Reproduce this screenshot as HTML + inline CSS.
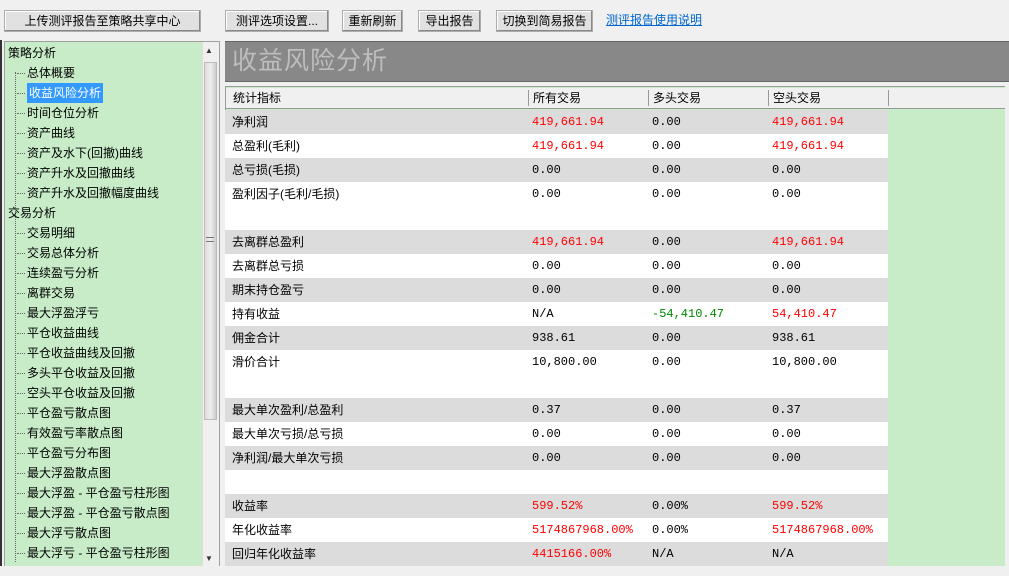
<!DOCTYPE html>
<html><head><meta charset="utf-8"><style>
*{margin:0;padding:0;box-sizing:border-box}
body{width:1009px;height:576px;background:#f0f0f0;position:relative;overflow:hidden;font-family:"Liberation Mono","WenQuanYi Zen Hei","Noto Sans CJK SC",monospace;font-size:12px;color:#000}
.abs{position:absolute}
.btn{position:absolute;top:10px;height:22px;background:#e1e1e1;border:1px solid #adadad;box-shadow:inset -1px -1px 0 #888,inset 1px 1px 0 #fff;font-family:"Liberation Sans","WenQuanYi Zen Hei",sans-serif;font-size:12px;text-align:center;line-height:20px}
.cjk{font-family:"Liberation Sans","WenQuanYi Zen Hei","Noto Sans CJK SC",sans-serif}
.tree{left:4px;top:41px;width:216px;height:526px;background:#c8ecc8;border:1px solid #a0a0a0}
.ti{position:absolute;left:22px;height:20px;line-height:20px;font-size:12px;white-space:nowrap}
.ti::before{content:"";position:absolute;left:-10px;top:10px;width:8px;border-top:1px dotted #666}
.th{position:absolute;left:3px;height:20px;line-height:20px;font-size:12px}
.row{position:absolute;left:225px;width:663px;height:24px}
.c{position:absolute;top:0;height:24px;line-height:24px;font-size:12px;white-space:nowrap;font-family:"Liberation Mono","WenQuanYi Zen Hei",monospace}
.c.cjk{font-family:"Liberation Sans","WenQuanYi Zen Hei",sans-serif}
.r{color:#f00}.g{color:#080}
.hd{position:absolute;top:0;height:20px;line-height:20px}
</style></head><body>
<div class="abs" style="left:0;top:40px;width:2px;height:528px;background:#333"></div>
<div class="btn" style="left:4px;width:197px">上传测评报告至策略共享中心</div>
<div class="btn" style="left:225px;width:104px">测评选项设置...</div>
<div class="btn" style="left:342px;width:61px">重新刷新</div>
<div class="btn" style="left:418px;width:63px">导出报告</div>
<div class="btn" style="left:496px;width:97px">切换到简易报告</div>
<div class="abs cjk" style="left:606px;top:11px;color:#0066cc;text-decoration:underline;font-size:12px">测评报告使用说明</div>

<div class="abs tree cjk">
<div class="abs" style="left:10px;top:30px;height:490px;border-left:1px dotted #666"></div>
<div class="th" style="top:1px">策略分析</div>
<div class="ti" style="top:21px">总体概要</div>
<div class="ti" style="top:41px;background:#3399ff;color:#fff;padding:0 2px">收益风险分析</div>
<div class="ti" style="top:61px">时间仓位分析</div>
<div class="ti" style="top:81px">资产曲线</div>
<div class="ti" style="top:101px">资产及水下(回撤)曲线</div>
<div class="ti" style="top:121px">资产升水及回撤曲线</div>
<div class="ti" style="top:141px">资产升水及回撤幅度曲线</div>
<div class="th" style="top:161px">交易分析</div>
<div class="ti" style="top:181px">交易明细</div>
<div class="ti" style="top:201px">交易总体分析</div>
<div class="ti" style="top:221px">连续盈亏分析</div>
<div class="ti" style="top:241px">离群交易</div>
<div class="ti" style="top:261px">最大浮盈浮亏</div>
<div class="ti" style="top:281px">平仓收益曲线</div>
<div class="ti" style="top:301px">平仓收益曲线及回撤</div>
<div class="ti" style="top:321px">多头平仓收益及回撤</div>
<div class="ti" style="top:341px">空头平仓收益及回撤</div>
<div class="ti" style="top:361px">平仓盈亏散点图</div>
<div class="ti" style="top:381px">有效盈亏率散点图</div>
<div class="ti" style="top:401px">平仓盈亏分布图</div>
<div class="ti" style="top:421px">最大浮盈散点图</div>
<div class="ti" style="top:441px">最大浮盈 - 平仓盈亏柱形图</div>
<div class="ti" style="top:461px">最大浮盈 - 平仓盈亏散点图</div>
<div class="ti" style="top:481px">最大浮亏散点图</div>
<div class="ti" style="top:501px">最大浮亏 - 平仓盈亏柱形图</div>
<div class="abs" style="left:197px;top:0;width:17px;height:524px;background:#f0f0f0;border-left:1px solid #ddd"></div>
<div class="abs" style="left:200px;top:4px;font-size:8px;color:#333">▲</div>
<div class="abs" style="left:200px;top:512px;font-size:8px;color:#333">▼</div>
<div class="abs" style="left:199px;top:20px;width:13px;height:358px;background:linear-gradient(90deg,#ddd,#eee,#ccc);border:1px solid #bbb"></div>
<div class="abs" style="left:201px;top:195px;width:8px;height:5px;border-top:1px solid #777;border-bottom:1px solid #777"></div>
</div>

<div class="abs cjk" style="left:225px;top:41px;width:784px;height:41px;background:#888;border-top:1px solid #666;border-bottom:1px solid #666;color:#bdbdbd;font-size:25px;line-height:38px;padding-left:7px;letter-spacing:1px">收益风险分析</div>

<div class="abs" style="left:225px;top:86px;width:784px;height:490px;background:#c8ecc8;border-left:1px solid #999;border-top:1px solid #999"></div>
<div class="abs cjk" style="left:226px;top:88px;width:779px;height:21px;background:#f0f0f0;border-bottom:1px solid #999">
<div class="hd" style="left:7px">统计指标</div>
<div class="abs" style="left:302px;top:2px;height:16px;border-left:1px solid #999"></div>
<div class="hd" style="left:307px">所有交易</div>
<div class="abs" style="left:422px;top:2px;height:16px;border-left:1px solid #999"></div>
<div class="hd" style="left:427px">多头交易</div>
<div class="abs" style="left:542px;top:2px;height:16px;border-left:1px solid #999"></div>
<div class="hd" style="left:547px">空头交易</div>
<div class="abs" style="left:662px;top:2px;height:16px;border-left:1px solid #999"></div>
</div>

<div class="row" style="top:110px;background:#dcdcdc"><span class="c cjk" style="left:7px">净利润</span><span class="c r" style="left:307px">419,661.94</span><span class="c" style="left:427px">0.00</span><span class="c r" style="left:547px">419,661.94</span></div>
<div class="row" style="top:134px;background:#fff"><span class="c cjk" style="left:7px">总盈利(毛利)</span><span class="c r" style="left:307px">419,661.94</span><span class="c" style="left:427px">0.00</span><span class="c r" style="left:547px">419,661.94</span></div>
<div class="row" style="top:158px;background:#dcdcdc"><span class="c cjk" style="left:7px">总亏损(毛损)</span><span class="c" style="left:307px">0.00</span><span class="c" style="left:427px">0.00</span><span class="c" style="left:547px">0.00</span></div>
<div class="row" style="top:182px;height:48px;background:#fff"><span class="c cjk" style="left:7px">盈利因子(毛利/毛损)</span><span class="c" style="left:307px">0.00</span><span class="c" style="left:427px">0.00</span><span class="c" style="left:547px">0.00</span></div>
<div class="row" style="top:230px;background:#dcdcdc"><span class="c cjk" style="left:7px">去离群总盈利</span><span class="c r" style="left:307px">419,661.94</span><span class="c" style="left:427px">0.00</span><span class="c r" style="left:547px">419,661.94</span></div>
<div class="row" style="top:254px;background:#fff"><span class="c cjk" style="left:7px">去离群总亏损</span><span class="c" style="left:307px">0.00</span><span class="c" style="left:427px">0.00</span><span class="c" style="left:547px">0.00</span></div>
<div class="row" style="top:278px;background:#dcdcdc"><span class="c cjk" style="left:7px">期末持仓盈亏</span><span class="c" style="left:307px">0.00</span><span class="c" style="left:427px">0.00</span><span class="c" style="left:547px">0.00</span></div>
<div class="row" style="top:302px;background:#fff"><span class="c cjk" style="left:7px">持有收益</span><span class="c" style="left:307px">N/A</span><span class="c g" style="left:427px">-54,410.47</span><span class="c r" style="left:547px">54,410.47</span></div>
<div class="row" style="top:326px;background:#dcdcdc"><span class="c cjk" style="left:7px">佣金合计</span><span class="c" style="left:307px">938.61</span><span class="c" style="left:427px">0.00</span><span class="c" style="left:547px">938.61</span></div>
<div class="row" style="top:350px;height:48px;background:#fff"><span class="c cjk" style="left:7px">滑价合计</span><span class="c" style="left:307px">10,800.00</span><span class="c" style="left:427px">0.00</span><span class="c" style="left:547px">10,800.00</span></div>
<div class="row" style="top:398px;background:#dcdcdc"><span class="c cjk" style="left:7px">最大单次盈利/总盈利</span><span class="c" style="left:307px">0.37</span><span class="c" style="left:427px">0.00</span><span class="c" style="left:547px">0.37</span></div>
<div class="row" style="top:422px;background:#fff"><span class="c cjk" style="left:7px">最大单次亏损/总亏损</span><span class="c" style="left:307px">0.00</span><span class="c" style="left:427px">0.00</span><span class="c" style="left:547px">0.00</span></div>
<div class="row" style="top:446px;background:#dcdcdc"><span class="c cjk" style="left:7px">净利润/最大单次亏损</span><span class="c" style="left:307px">0.00</span><span class="c" style="left:427px">0.00</span><span class="c" style="left:547px">0.00</span></div>
<div class="row" style="top:470px;background:#fff"></div>
<div class="row" style="top:494px;background:#dcdcdc"><span class="c cjk" style="left:7px">收益率</span><span class="c r" style="left:307px">599.52%</span><span class="c" style="left:427px">0.00%</span><span class="c r" style="left:547px">599.52%</span></div>
<div class="row" style="top:518px;background:#fff"><span class="c cjk" style="left:7px">年化收益率</span><span class="c r" style="left:307px">5174867968.00%</span><span class="c" style="left:427px">0.00%</span><span class="c r" style="left:547px">5174867968.00%</span></div>
<div class="row" style="top:542px;background:#dcdcdc"><span class="c cjk" style="left:7px">回归年化收益率</span><span class="c r" style="left:307px">4415166.00%</span><span class="c" style="left:427px">N/A</span><span class="c" style="left:547px">N/A</span></div>
<div class="abs" style="left:0;top:566px;width:1009px;height:10px;background:#f0f0f0"></div>
<div class="abs" style="left:1005px;top:86px;width:4px;height:480px;background:#f0f0f0"></div>
</body></html>
